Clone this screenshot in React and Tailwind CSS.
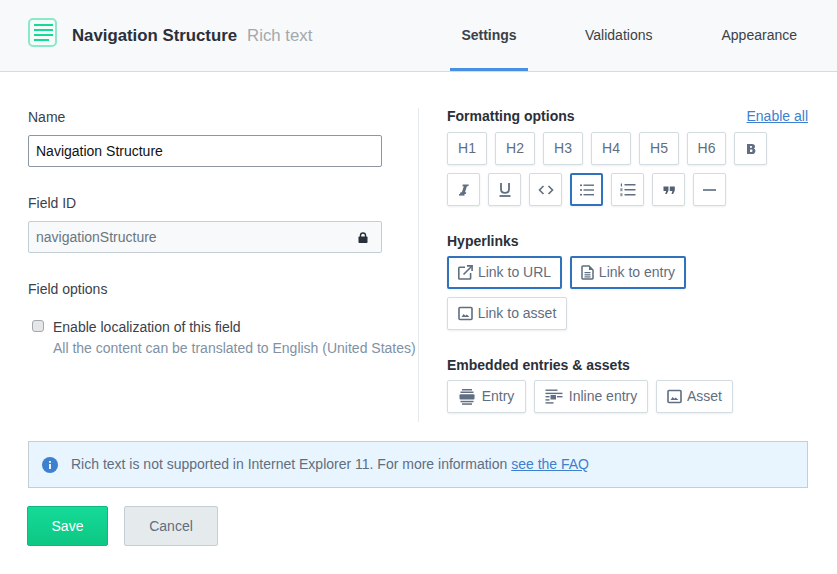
const ICON = '#5f6e80'

function BoldIcon() {
  return (
    <svg width="14" height="14" viewBox="0 0 14 14" fill={ICON}>
      <path fillRule="evenodd" d="M3 2h5c2 0 3 1 3 2.500 0 1-.5 1.700-1.400 2.100 1.100.3 1.800 1.100 1.800 2.300 0 1.900-1.300 3.100-3.400 3.100H3zm3 1.900v1.900h1.200c.6 0 .9-.4.9-.9 0-.6-.3-1-.9-1zm0 3.700v2.400h1.500c.7 0 1-.5 1-1.200s-.3-1.200-1-1.200z" />
    </svg>
  )
}

function ItalicIcon() {
  return (
    <svg width="14" height="14" viewBox="0 0 14 14" fill={ICON}>
      <path d="M5.800 1.500h6l-.5 1.800H9.900L8 9.200h1.300l-.5 1.800H3l.5-1.800h1.400l1.900-5.900H5.300z" />
      <rect x="2" y="11" width="5.500" height="1.600" />
    </svg>
  )
}

function UnderlineIcon() {
  return (
    <svg width="14" height="15" viewBox="0 0 14 15" fill="none" stroke={ICON} strokeWidth="1.800">
      <path d="M3 1v6.200c0 2.400 1.600 3.600 4 3.600s4-1.200 4-3.600V1" />
      <path d="M1.500 14h11" />
    </svg>
  )
}

function CodeIcon() {
  return (
    <svg width="16" height="12" viewBox="0 0 16 12" fill="none" stroke={ICON} strokeWidth="1.600">
      <path d="M5.500 2L1.500 6l4 4" />
      <path d="M10.500 2l4 4-4 4" />
    </svg>
  )
}

function ListIcon() {
  return (
    <svg width="14" height="12" viewBox="0 0 14 12" fill={ICON}>
      <rect x="0" y="0.500" width="2" height="1.600" />
      <rect x="3.500" y="0.500" width="10.500" height="1.400" />
      <rect x="0" y="5.200" width="2" height="1.600" />
      <rect x="3.500" y="5.300" width="10.500" height="1.400" />
      <rect x="0" y="9.900" width="2" height="1.600" />
      <rect x="3.500" y="10" width="10.500" height="1.400" />
    </svg>
  )
}

function OrderedIcon() {
  return (
    <svg width="16" height="14" viewBox="0 0 16 14" fill={ICON}>
      <rect x="0.800" y="0.500" width="1.200" height="3" />
      <rect x="0.300" y="5.200" width="2.200" height="3" opacity="0.700" />
      <rect x="0.300" y="10.200" width="2.200" height="3" opacity="0.700" />
      <rect x="4.500" y="1" width="11" height="1.500" />
      <rect x="4.500" y="6" width="11" height="1.500" />
      <rect x="4.500" y="11" width="11" height="1.500" />
    </svg>
  )
}

function QuoteIcon() {
  return (
    <svg width="14" height="14" viewBox="0 0 14 14" fill="#536171">
      <path d="M1.500 3.500h5v4L4.800 11H3.200l.9-3H1.500z" />
      <path d="M7.800 3.500h5v4L11.100 11H9.500l.9-3H7.800z" />
    </svg>
  )
}

function LockIcon() {
  return (
    <svg width="10" height="11" viewBox="0 0 10 11" fill="none" className="mr-[6px]">
      <rect x="0.500" y="4.500" width="9" height="6.500" rx="0.800" fill="#2a3039" />
      <path d="M2.500 5V3.200C2.500 1.800 3.500 1 5 1s2.500.8 2.500 2.200V5" stroke="#2a3039" strokeWidth="1.400" />
    </svg>
  )
}

function UrlIcon() {
  return (
    <svg width="15" height="15" viewBox="0 0 15 15" fill="none" stroke={ICON} strokeWidth="1.600">
      <path d="M7 2.200H1.500a.7.7 0 0 0-.7.7v10.400c0 .4.3.7.7.7h10.400c.4 0 .7-.3.7-.7V8" />
      <path d="M5.500 9.500L14 1" />
      <path d="M9 .9h5.100V6" />
    </svg>
  )
}

function DocIcon() {
  return (
    <svg width="13" height="15" viewBox="0 0 13 15" fill="none">
      <path d="M1 1.700c0-.4.3-.7.7-.7H8l4 4v8.300c0 .4-.3.7-.7.7H1.700a.7.7 0 0 1-.7-.7z" stroke={ICON} strokeWidth="1.500" />
      <path d="M8 1v4h4z" fill={ICON} />
      <rect x="3.500" y="7" width="6" height="1.200" fill={ICON} />
      <rect x="3.500" y="9.200" width="6" height="1.200" fill={ICON} />
      <rect x="3.500" y="11.300" width="6" height="1.200" fill={ICON} />
    </svg>
  )
}

function AssetIcon() {
  return (
    <svg width="15" height="15" viewBox="0 0 15 15" fill="none">
      <rect x="1" y="1.500" width="13" height="12" rx="1" stroke={ICON} strokeWidth="1.600" />
      <path d="M3.500 11l2.200-3 1.600 1.800 1.400-1.400 2.800 2.600z" fill={ICON} />
    </svg>
  )
}

function EntryIcon() {
  return (
    <svg width="16" height="16" viewBox="0 0 16 16" fill={ICON}>
      <rect x="3" y="0" width="10" height="1.500" />
      <rect x="1.500" y="2.500" width="13" height="1.500" />
      <rect x="0.500" y="5.300" width="15" height="5.200" rx="1" />
      <rect x="1.500" y="11.800" width="13" height="1.500" />
      <rect x="3" y="14.300" width="10" height="1.500" />
    </svg>
  )
}

function InlineIcon() {
  return (
    <svg width="18" height="15" viewBox="0 0 18 15" fill={ICON}>
      <rect x="0.500" y="0.500" width="12" height="1.400" />
      <rect x="0.500" y="3.700" width="17" height="1.400" />
      <rect x="0.500" y="7" width="4" height="1.400" />
      <rect x="5.500" y="6" width="5.500" height="4.500" rx="0.500" />
      <rect x="12" y="7" width="5.500" height="1.400" />
      <rect x="0.500" y="10.200" width="4" height="1.400" />
      <rect x="0.500" y="13.200" width="8" height="1.400" />
    </svg>
  )
}

function Opt({ children, active, className = '' }) {
  return (
    <button
      className={`h-[33px] flex items-center justify-center rounded-[2px] bg-white text-[14px] text-[#5f6e80] shadow-[0_1px_2px_rgba(25,37,50,0.08)] ${
        active ? 'border-2 border-[#3072be]' : 'border border-[#d3dce0]'
      } ${className}`}
    >
      {children}
    </button>
  )
}

export default function App() {
  return (
    <div className="w-[837px] h-[574px] bg-white overflow-hidden font-['Liberation_Sans',Arial,sans-serif] text-[14px] text-[#2a3039]">
      {/* header */}
      <header className="h-[72px] bg-[#f7f9fa] border-b border-[#d3dce0] flex items-center pl-[28px] pr-[29px]">
        <div className="w-[29px] h-[29px] -mt-[6px] rounded-[5px] border-2 border-[#8de8c9] bg-[#f4fbf8] flex flex-col items-start justify-center gap-[3px] pl-[4px]">
          <span className="block w-[19px] h-[2px] bg-[#14d997]" />
          <span className="block w-[19px] h-[2px] bg-[#14d997]" />
          <span className="block w-[19px] h-[2px] bg-[#14d997]" />
          <span className="block w-[15px] h-[2px] bg-[#14d997]" />
        </div>
        <span className="ml-[15px] text-[16.8px] font-bold text-[#2a3039]">Navigation Structure</span>
        <span className="ml-[10px] text-[16.8px] text-[#a3a8ad]">Rich text</span>
        <nav className="ml-auto flex h-full gap-[47px]">
          <div className="h-full w-[78px] -mr-[1px] pt-[2px] flex items-center justify-center border-b-[3px] -mb-[1px] border-[#4a90e2] font-bold text-[#3c4148]">Settings</div>
          <div className="h-full pt-[2px] flex items-center px-[11px] border-b-[3px] -mb-[1px] border-transparent text-[#3c4148]">Validations</div>
          <div className="h-full pt-[2px] flex items-center px-[11px] border-b-[3px] -mb-[1px] border-transparent text-[#3c4148]">Appearance</div>
        </nav>
      </header>

      <main className="pt-[36px] pl-[28px] pr-[29px]">
        <div className="flex">
          {/* left column */}
          <section className="w-[391px] h-[314px] border-r border-[#e5ebed] shrink-0">
            <div className="w-[354px]">
              <label className="block leading-[18px] text-[#3c4148]">Name</label>
              <div className="mt-[9px] h-[32px] rounded-[2px] border border-[#8c97a3] bg-white flex items-center px-[7px] text-[#111]">
                Navigation Structure
              </div>

              <label className="block mt-[27px] leading-[18px] text-[#3c4148]">Field ID</label>
              <div className="mt-[9px] h-[32px] rounded-[2px] border border-[#c3cfd5] bg-[#f7f9fa] flex items-center justify-between px-[7px] text-[#6b7580]">
                <span>navigationStructure</span>
                <LockIcon />
              </div>

              <label className="block mt-[27px] leading-[18px] text-[#3c4148]">Field options</label>

              <div className="mt-[19px] ml-[4px] flex">
                <span className="mt-[3px] w-[12px] h-[12px] rounded-[3px] border border-[#a5a9ad] bg-[#e4e6e8] shrink-0" />
                <div className="ml-[9px] whitespace-nowrap">
                  <div className="leading-[20px] text-[#3c4148]">Enable localization of this field</div>
                  <div className="mt-[1px] leading-[20px] text-[#8091a5]">All the content can be translated to English (United States)</div>
                </div>
              </div>
            </div>
          </section>

          {/* right column */}
          <section className="flex-1 pl-[28px]">
            <div className="-mt-[1px] flex justify-between leading-[18px]">
              <span className="font-bold">Formatting options</span>
              <a className="text-[#3c80cf] underline">Enable all</a>
            </div>
            <div className="mt-[7px] flex gap-[8px]">
              <Opt className="w-[40px]">H1</Opt>
              <Opt className="w-[40px]">H2</Opt>
              <Opt className="w-[40px]">H3</Opt>
              <Opt className="w-[40px]">H4</Opt>
              <Opt className="w-[40px]">H5</Opt>
              <Opt className="w-[39px]">H6</Opt>
              <Opt className="w-[33px]"><BoldIcon /></Opt>
            </div>
            <div className="mt-[8px] flex gap-[8px]">
              <Opt className="w-[33px]"><ItalicIcon /></Opt>
              <Opt className="w-[33px]"><UnderlineIcon /></Opt>
              <Opt className="w-[33px]"><CodeIcon /></Opt>
              <Opt className="w-[33px]" active><ListIcon /></Opt>
              <Opt className="w-[33px]"><OrderedIcon /></Opt>
              <Opt className="w-[33px]"><QuoteIcon /></Opt>
              <Opt className="w-[33px]"><span className="block w-[13px] h-[2px] bg-[#7a8899]" /></Opt>
            </div>

            <div className="mt-[26px] font-bold leading-[18px]">Hyperlinks</div>
            <div className="mt-[6px] flex flex-wrap gap-[8px]">
              <Opt active className="w-[115px] gap-[5px]"><UrlIcon />Link to URL</Opt>
              <Opt active className="w-[116px] gap-[5px]"><DocIcon />Link to entry</Opt>
              <Opt className="w-[120px] gap-[5px]"><AssetIcon />Link to asset</Opt>
            </div>

            <div className="mt-[26px] font-bold leading-[18px]">Embedded entries &amp; assets</div>
            <div className="mt-[6px] flex gap-[8px]">
              <Opt className="w-[79px] gap-[7px]"><EntryIcon />Entry</Opt>
              <Opt className="w-[114px] gap-[6px]"><InlineIcon />Inline entry</Opt>
              <Opt className="w-[77px] gap-[5px]"><AssetIcon />Asset</Opt>
            </div>
          </section>
        </div>

        {/* note */}
        <div className="mt-[19px] h-[47px] border border-[#c3cfd5] bg-[#e8f5ff] flex items-center pl-[13px] text-[#5f6e80]">
          <svg width="16" height="16" viewBox="0 0 16 16" className="shrink-0">
            <circle cx="8" cy="8" r="8" fill="#3c80cf" />
            <rect x="7.100" y="7" width="1.800" height="5" fill="#fff" />
            <rect x="7.100" y="4" width="1.800" height="1.800" fill="#fff" />
          </svg>
          <p className="ml-[13px]">
            Rich text is not supported in Internet Explorer 11. For more information <a className="text-[#3c80cf] underline">see the FAQ</a>
          </p>
        </div>

        <div className="mt-[18px] -ml-[1px] flex gap-[16px]">
          <button className="w-[81px] h-[40px] rounded-[2px] border border-[#0eb87f] bg-gradient-to-b from-[#15da98] to-[#0dc783] text-white">Save</button>
          <button className="w-[94px] h-[40px] rounded-[2px] border border-[#c3cfd5] bg-[#e5ebed] text-[#5f6e80]">Cancel</button>
        </div>
      </main>
    </div>
  )
}
